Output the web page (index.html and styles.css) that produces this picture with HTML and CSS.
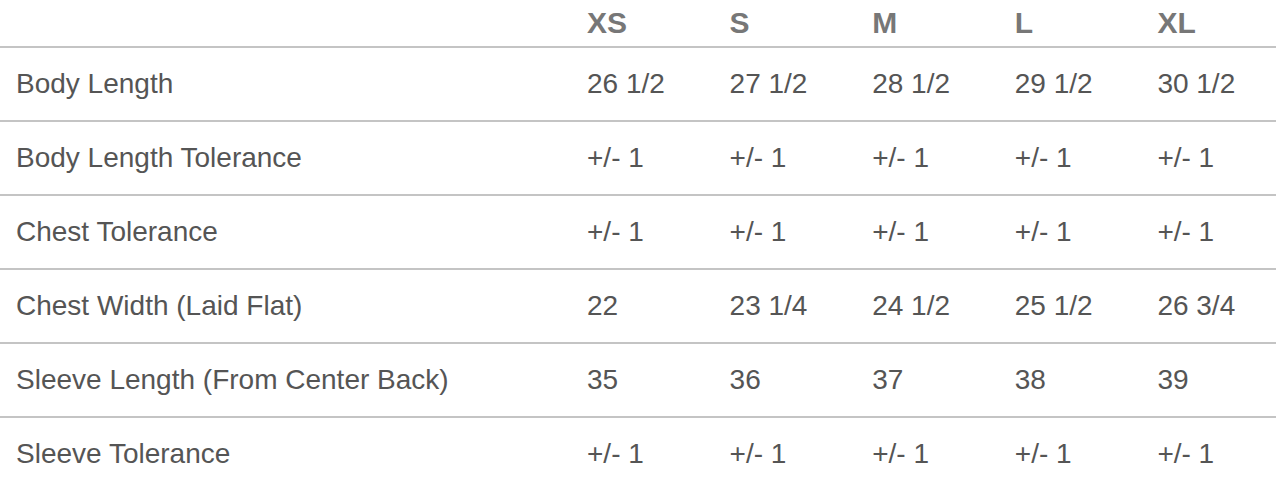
FILE: index.html
```html
<!DOCTYPE html>
<html>
<head>
<meta charset="utf-8">
<link rel="stylesheet" href="styles.css">
</head>
<body>
<div class="size-table">
  <div class="row head">
    <div class="cell label"></div>
    <div class="cell">XS</div>
    <div class="cell">S</div>
    <div class="cell">M</div>
    <div class="cell">L</div>
    <div class="cell">XL</div>
  </div>
  <div class="row">
    <div class="cell label">Body Length</div>
    <div class="cell">26 1/2</div>
    <div class="cell">27 1/2</div>
    <div class="cell">28 1/2</div>
    <div class="cell">29 1/2</div>
    <div class="cell">30 1/2</div>
  </div>
  <div class="row">
    <div class="cell label">Body Length Tolerance</div>
    <div class="cell">+/- 1</div>
    <div class="cell">+/- 1</div>
    <div class="cell">+/- 1</div>
    <div class="cell">+/- 1</div>
    <div class="cell">+/- 1</div>
  </div>
  <div class="row">
    <div class="cell label">Chest Tolerance</div>
    <div class="cell">+/- 1</div>
    <div class="cell">+/- 1</div>
    <div class="cell">+/- 1</div>
    <div class="cell">+/- 1</div>
    <div class="cell">+/- 1</div>
  </div>
  <div class="row">
    <div class="cell label">Chest Width (Laid Flat)</div>
    <div class="cell">22</div>
    <div class="cell">23 1/4</div>
    <div class="cell">24 1/2</div>
    <div class="cell">25 1/2</div>
    <div class="cell">26 3/4</div>
  </div>
  <div class="row">
    <div class="cell label">Sleeve Length (From Center Back)</div>
    <div class="cell">35</div>
    <div class="cell">36</div>
    <div class="cell">37</div>
    <div class="cell">38</div>
    <div class="cell">39</div>
  </div>
  <div class="row">
    <div class="cell label">Sleeve Tolerance</div>
    <div class="cell">+/- 1</div>
    <div class="cell">+/- 1</div>
    <div class="cell">+/- 1</div>
    <div class="cell">+/- 1</div>
    <div class="cell">+/- 1</div>
  </div>
</div>
</body>
</html>
```
FILE: styles.css
```css
html, body {
  margin: 0;
  padding: 0;
  background: #ffffff;
  overflow: hidden;
}
body {
  font-family: "Liberation Sans", Arial, Helvetica, sans-serif;
  color: #555555;
}
.size-table {
  width: 1284px;
}
.row {
  display: grid;
  grid-template-columns: 571px repeat(5, 142.6px);
  align-items: center;
  height: 72px;
  border-top: 2px solid #c4c4c4;
}
.row.head {
  height: 46px;
  border-top: none;
  font-weight: bold;
  color: #777777;
}
.cell {
  padding-left: 16px;
  font-size: 28px;
  line-height: 32px;
  white-space: nowrap;
}
.row.head .cell {
  font-size: 30px;
  line-height: 34px;
}
```
